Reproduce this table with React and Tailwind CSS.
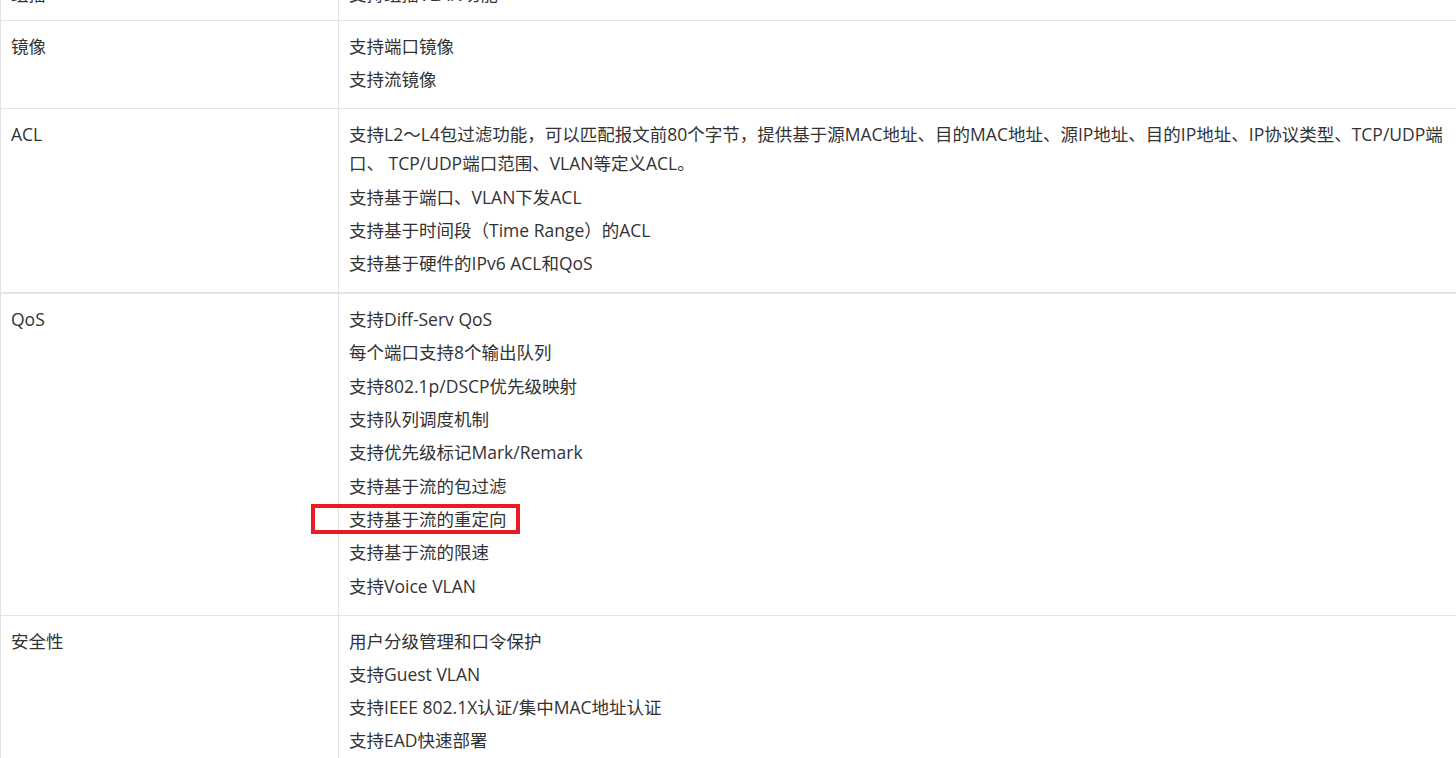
import React from "react";

const rows = [
  { label: "组播", items: ["支持组播VLAN功能"], first: true },
  { label: "镜像", items: ["支持端口镜像", "支持流镜像"] },
  {
    label: "ACL",
    items: [
      <>
        支持L2～L4包过滤功能，可以匹配报文前80个字节，提供基于源MAC地址、目的MAC地址、源IP地址、目的IP地址、IP协议类型、TCP/UDP端
        <br />
        口、 TCP/UDP端口范围、VLAN等定义ACL。
      </>,
      "支持基于端口、VLAN下发ACL",
      "支持基于时间段（Time Range）的ACL",
      "支持基于硬件的IPv6 ACL和QoS",
    ],
    thick: true,
  },
  {
    label: "QoS",
    items: [
      "支持Diff-Serv QoS",
      "每个端口支持8个输出队列",
      "支持802.1p/DSCP优先级映射",
      "支持队列调度机制",
      "支持优先级标记Mark/Remark",
      "支持基于流的包过滤",
      "HIGHLIGHT",
      "支持基于流的限速",
      "支持Voice VLAN",
    ],
  },
  {
    label: "安全性",
    items: [
      "用户分级管理和口令保护",
      "支持Guest VLAN",
      "支持IEEE 802.1X认证/集中MAC地址认证",
      "支持EAD快速部署",
    ],
  },
];

export default function App() {
  return (
    <div className="w-[1456px] h-[758px] overflow-hidden bg-white text-[#333] text-[17.5px] leading-[29px] font-['Open_Sans','Noto_Sans_CJK_SC',sans-serif]">
      <div className="-mt-[31px] w-[1520px] border-l border-[#e3e3e3]">
        {rows.map((row, i) => (
          <div
            key={i}
            className={
              row.thick
                ? "flex border-b-2 border-[#e3e3e3]"
                : "flex border-b border-[#e3e3e3]"
            }
          >
            <div
              className={
                row.first
                  ? "w-[338px] shrink-0 border-r border-[#e3e3e3] px-[10px] pt-[11px] pb-[11px]"
                  : "w-[338px] shrink-0 border-r border-[#e3e3e3] px-[10px] pt-[11px] pb-[14px]"
              }
            >
              {row.label}
            </div>
            <div
              className={
                row.first
                  ? "flex-1 px-[10px] pt-[11px] pb-[11px] flex flex-col gap-[4.3px] whitespace-nowrap"
                  : "flex-1 px-[10px] pt-[11px] pb-[14px] flex flex-col gap-[4.3px] whitespace-nowrap"
              }
            >
              {row.items.map((it, j) =>
                it === "HIGHLIGHT" ? (
                  <div key={j}>
                    <span className="relative inline-block">
                      支持基于流的重定向
                      <span className="absolute -left-[38px] -top-[1px] w-[209px] h-[30px] border-4 border-[#e81c24]"></span>
                    </span>
                  </div>
                ) : (
                  <div key={j}>{it}</div>
                )
              )}
            </div>
          </div>
        ))}
      </div>
    </div>
  );
}
